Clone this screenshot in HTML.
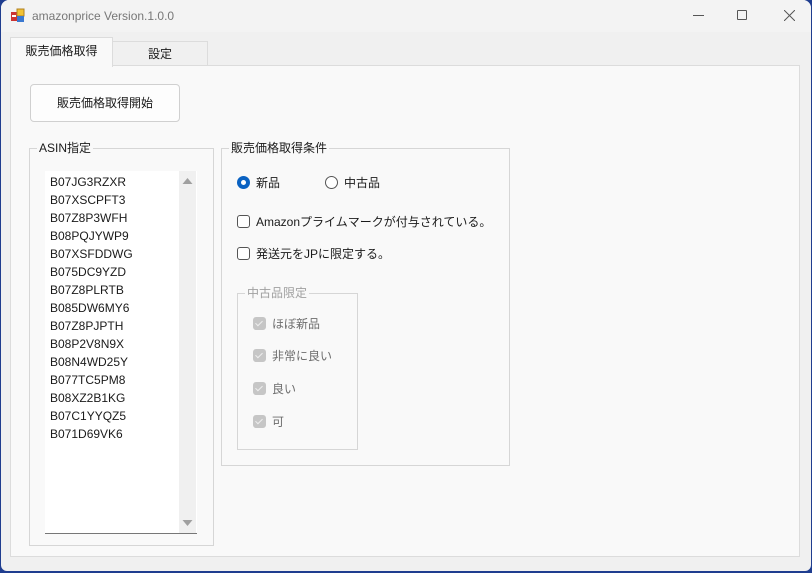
<!DOCTYPE html>
<html><head><meta charset="utf-8"><style>
*{margin:0;padding:0;box-sizing:border-box}
body{width:812px;height:573px;background:#1f3d8f;font-family:"Liberation Sans","Noto Sans CJK JP",sans-serif;font-size:12px;color:#1a1a1a;position:relative;overflow:hidden}
.win{position:absolute;left:1px;top:0;width:810px;height:571px;background:#f0f0f0;border-radius:8px 8px 6px 6px;overflow:hidden}
.title{position:absolute;left:0;top:0;width:100%;height:32px;background:#f3f3f3}
.a{position:absolute;white-space:nowrap}
.tabpage{position:absolute;left:9px;top:65px;width:790px;height:492px;background:#f9f9f9;border:1px solid #dcdcdc}
.gb{position:absolute;border:1px solid #d6d6d6}
.gbl{position:absolute;top:-9px;left:7px;background:#f9f9f9;padding:0 2px;line-height:16px}
.cb{position:absolute;width:13px;height:13px;border:1px solid #555;border-radius:3px;background:#fff}
.dcb{position:absolute;width:13px;height:13px;border-radius:3px;background:#c6c6c6}
.dcb::after{content:"";position:absolute;left:4px;top:2px;width:3px;height:6px;border:solid #eee;border-width:0 1px 1px 0;transform:rotate(45deg)}
</style></head><body>
<div class="win">
<div class="title">
<svg class="a" style="left:9px;top:8px" width="16" height="16"><rect x="1" y="4" width="6" height="9" fill="#c33"/><rect x="7" y="1" width="7" height="7" fill="#f2c233" stroke="#b08020"/><rect x="7" y="8" width="7" height="6" fill="#3a78d0"/><rect x="2" y="7" width="4" height="2" fill="#fff"/></svg>
<div class="a" style="left:31px;top:9px;color:#777;font-size:12px">amazonprice Version.1.0.0</div>
<div class="a" style="left:692px;top:15px;width:11px;height:1px;background:#555"></div>
<div class="a" style="left:736px;top:10px;width:10px;height:10px;border:1px solid #555;border-radius:1px"></div>
<svg class="a" style="left:783px;top:10px" width="11" height="11"><path d="M0 0L11 11M11 0L0 11" stroke="#555" stroke-width="1"/></svg>
</div>
<div class="a" style="left:111px;top:41px;width:96px;height:25px;background:#f0f0f0;border:1px solid #dcdcdc;border-bottom:none;text-align:center;line-height:24px">設定</div>
<div class="tabpage">
<div class="gb" style="left:18px;top:82px;width:185px;height:398px"><div class="gbl">ASIN指定</div>
<div class="a" style="left:15px;top:22px;width:152px;height:363px;background:#fff;border-bottom:1px solid #777">
<div class="a" style="left:5px;top:2px;line-height:18px">B07JG3RZXR<br>B07XSCPFT3<br>B07Z8P3WFH<br>B08PQJYWP9<br>B07XSFDDWG<br>B075DC9YZD<br>B07Z8PLRTB<br>B085DW6MY6<br>B07Z8PJPTH<br>B08P2V8N9X<br>B08N4WD25Y<br>B077TC5PM8<br>B08XZ2B1KG<br>B07C1YYQZ5<br>B071D69VK6</div>
<div class="a" style="left:134px;top:0;width:17px;height:362px;background:#f0f0f0"></div>
<svg class="a" style="left:137px;top:6px" width="11" height="8"><path d="M0.5 7L5.5 1L10.5 7Z" fill="#a0a0a0"/></svg>
<svg class="a" style="left:137px;top:348px" width="11" height="8"><path d="M0.5 1L5.5 7L10.5 1Z" fill="#a0a0a0"/></svg>
</div></div>
<div class="gb" style="left:210px;top:82px;width:289px;height:318px"><div class="gbl">販売価格取得条件</div>
<div class="a" style="left:15px;top:27px;width:13px;height:13px;border-radius:50%;background:#0a62c2"><div class="a" style="left:4px;top:4px;width:5px;height:5px;border-radius:50%;background:#fff"></div></div>
<div class="a" style="left:34px;top:25px">新品</div>
<div class="a" style="left:103px;top:27px;width:13px;height:13px;border-radius:50%;border:1px solid #555;background:#fff"></div>
<div class="a" style="left:122px;top:25px">中古品</div>
<div class="cb" style="left:15px;top:66px"></div><div class="a" style="left:34px;top:64px">Amazonプライムマークが付与されている。</div>
<div class="cb" style="left:15px;top:98px"></div><div class="a" style="left:34px;top:96px">発送元をJPに限定する。</div>
<div class="gb" style="left:15px;top:144px;width:121px;height:157px"><div class="gbl" style="color:#a0a0a0">中古品限定</div>
<div class="dcb" style="left:15px;top:23px"></div><div class="a" style="left:34px;top:21px;color:#6d6d6d">ほぼ新品</div>
<div class="dcb" style="left:15px;top:55px"></div><div class="a" style="left:34px;top:53px;color:#6d6d6d">非常に良い</div>
<div class="dcb" style="left:15px;top:88px"></div><div class="a" style="left:34px;top:86px;color:#6d6d6d">良い</div>
<div class="dcb" style="left:15px;top:121px"></div><div class="a" style="left:34px;top:119px;color:#6d6d6d">可</div>
</div></div>
<div class="a" style="left:19px;top:18px;width:150px;height:38px;background:#fdfdfd;border:1px solid #d0d0d0;border-radius:4px;text-align:center;line-height:36px">販売価格取得開始</div>
</div>
<div class="a" style="left:9px;top:37px;width:103px;height:30px;background:#f9f9f9;border:1px solid #dcdcdc;border-bottom:none;text-align:center;line-height:26px">販売価格取得</div>
</div>
</body></html>
